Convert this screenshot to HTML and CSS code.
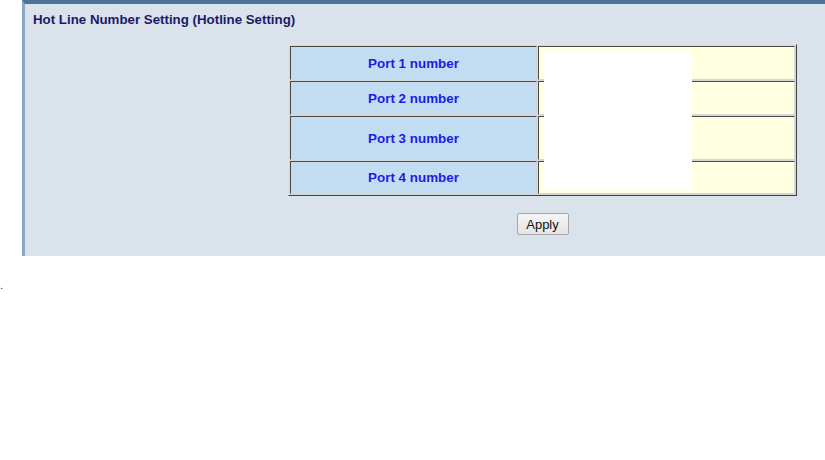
FILE: index.html
```html
<!DOCTYPE html>
<html lang="en">
<head>
  <meta charset="UTF-8">
  <title>Hot Line Number Setting</title>
  <link rel="stylesheet" href="styles.css">
</head>
<body>
  <div class="panel">
    <div class="panel-title">Hot Line Number Setting (Hotline Setting)</div>

    <div class="form-area">
      <table class="port-table">
        <tr class="row-a">
          <td class="label-cell">Port 1 number</td>
          <td class="value-cell"></td>
        </tr>
        <tr class="row-b">
          <td class="label-cell">Port 2 number</td>
          <td class="value-cell"></td>
        </tr>
        <tr class="row-c">
          <td class="label-cell">Port 3 number</td>
          <td class="value-cell"></td>
        </tr>
        <tr class="row-d">
          <td class="label-cell">Port 4 number</td>
          <td class="value-cell"></td>
        </tr>
      </table>

      <div class="button-row">
        <button class="apply-btn">Apply</button>
      </div>
    </div>

    <div class="blank-box"></div>
  </div>

  <div class="footer-dot">.</div>
</body>
</html>
```

FILE: styles.css
```css
body {
  margin: 0;
  padding: 0;
  background-color: #ffffff;
  font-family: 'Liberation Sans', Arial, sans-serif;
}
.panel {
  position: relative;
  margin-left: 22px;
  background-color: #dae2ec;
  border-top: 4px solid #4f7396;
  border-left: 3px solid #8aa8c4;
  padding: 9px 0 21px 0;
}
.panel-title {
  margin-left: 8px;
  font-size: 13.3px;
  line-height: 14px;
  font-weight: bold;
  color: #1c1a66;
}
.form-area {
  width: 509px;
  margin: 17px 0 0 263px;
}
.port-table {
  width: 509px;
  border-collapse: separate;
  border-spacing: 1px;
  background-color: #d6d6d6;
  border: 1px solid;
  border-color: #e2e2e2 #404040 #404040 #e2e2e2;
}
.port-table td {
  border: 1px solid;
  border-color: #4a4a4a #d6d6d6 #d6d6d6 #4a4a4a;
  padding: 0;
}
.label-cell {
  width: 245px;
  background-color: #c2dcf2;
  color: #1c1ce8;
  font-size: 13.4px;
  font-weight: bold;
  text-align: center;
}
.value-cell {
  background-color: #ffffe2;
}
.row-a td,
.row-b td {
  height: 32px;
}
.row-c td {
  height: 42px;
}
.row-d td {
  height: 31px;
}
.button-row {
  display: flex;
  justify-content: center;
  margin-top: 17px;
}
.apply-btn {
  height: 22px;
  width: 52px;
  padding: 0;
  font-family: 'Liberation Sans', Arial, sans-serif;
  font-size: 13px;
  color: #111;
  background: linear-gradient(#f6f6f6, #e4e4e4);
  border: 1px solid #a6a6a6;
  border-radius: 2px;
}
.blank-box {
  position: absolute;
  left: 519px;
  top: 47px;
  width: 148px;
  height: 139px;
  background-color: #ffffff;
}
.footer-dot {
  margin-top: 22px;
  font-size: 11px;
  line-height: 14px;
  color: #2020d0;
}
```
